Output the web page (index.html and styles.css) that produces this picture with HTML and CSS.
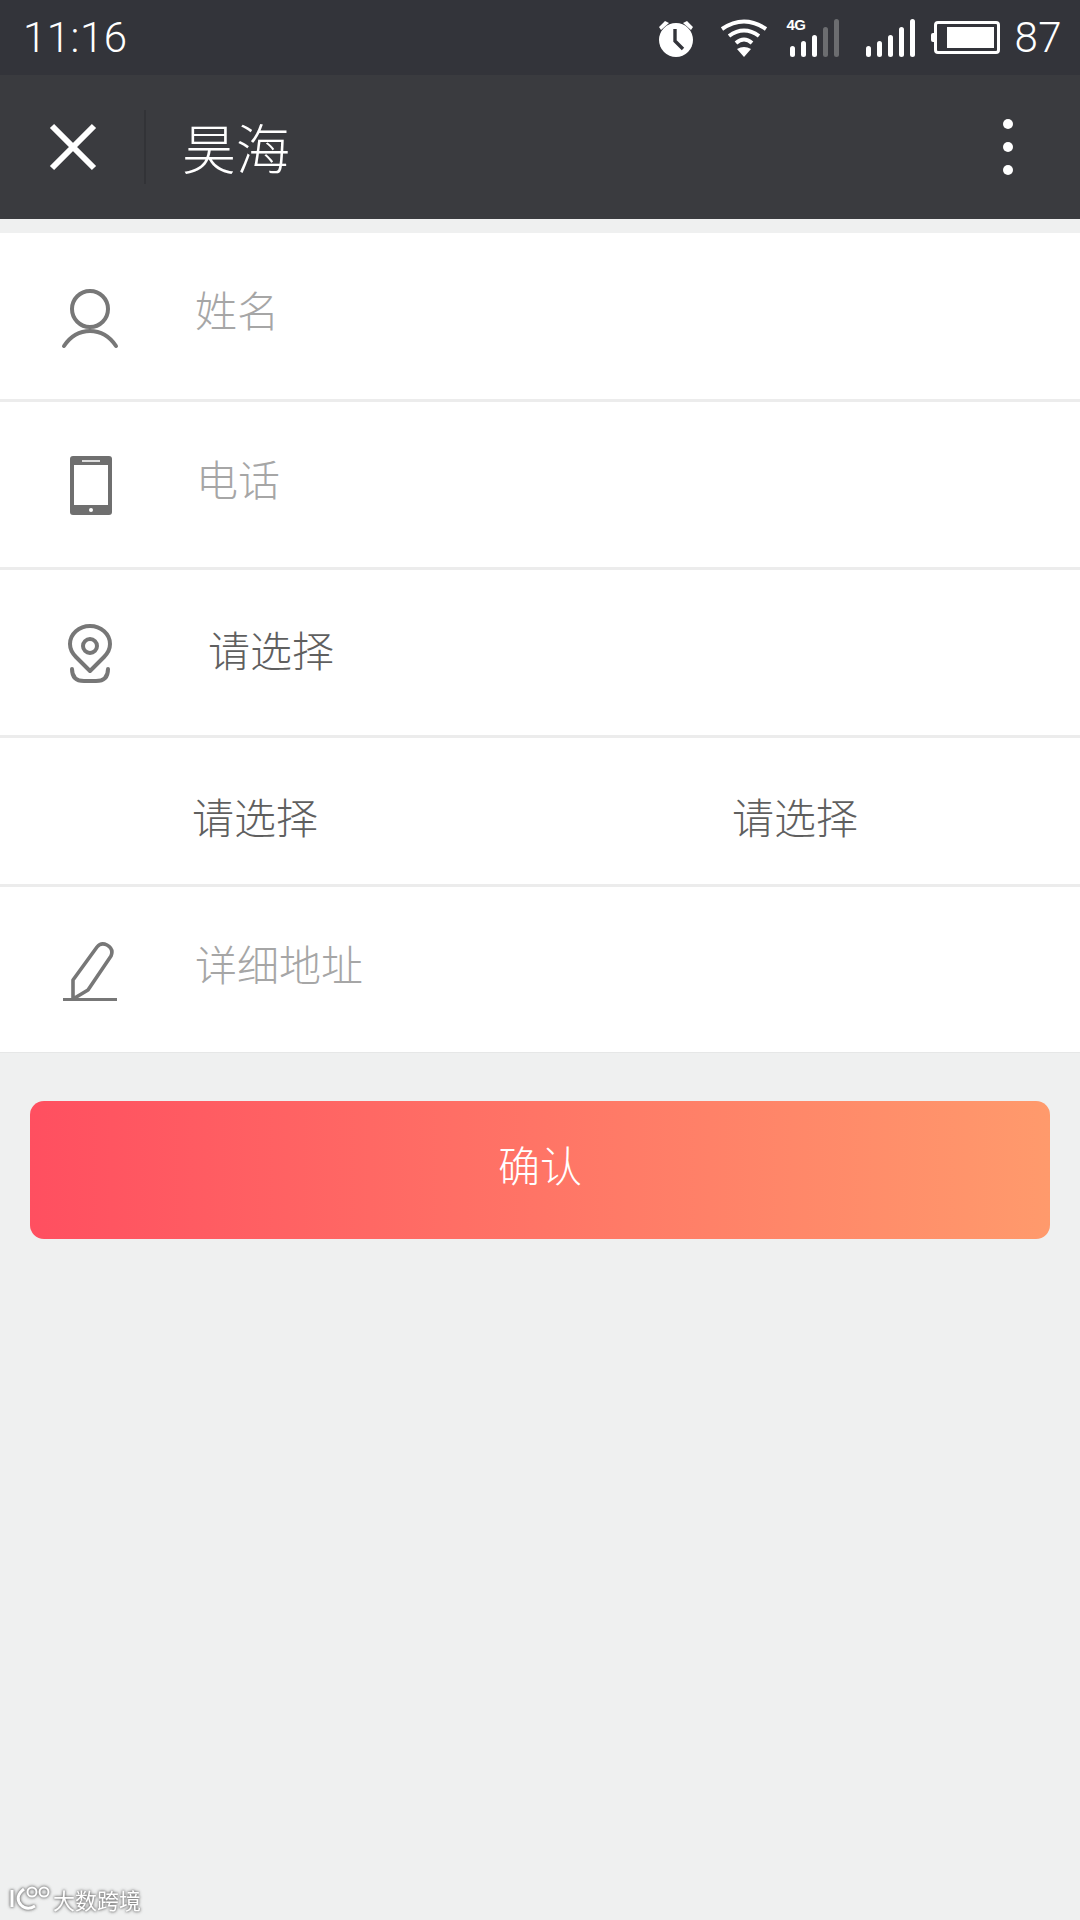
FILE: index.html
```html
<!DOCTYPE html>
<html lang="zh-CN">
<head>
    <meta charset="UTF-8">
    <meta name="viewport" content="width=device-width, initial-scale=1.0">
    <title>昊海</title>
    <link rel="stylesheet" href="styles.css">
</head>
<body>
    <div class="status-bar">
        <span class="time">11:16</span>
        <div class="status-icons">
            <svg class="ic-alarm" width="38" height="40" viewBox="0 0 38 40">
                <circle cx="19" cy="22" r="17" fill="#fff"/>
                <path d="M2 9 L8 3 L12 5 L4 12 Z M36 9 L30 3 L26 5 L34 12 Z" fill="#fff"/>
                <path d="M18 11 V23 L26 31" fill="none" stroke="#33343a" stroke-width="3.4"/>
            </svg>
            <svg class="ic-wifi" width="48" height="40" viewBox="0 0 48 40">
                <path d="M2 11 Q24 -4 46 11" fill="none" stroke="#fff" stroke-width="4"/>
                <path d="M9 18 Q24 7 39 18" fill="none" stroke="#fff" stroke-width="4"/>
                <path d="M16 25 Q24 18 32 25" fill="none" stroke="#fff" stroke-width="4"/>
                <path d="M17 31 Q24 27 31 31 L24 39 Z" fill="#fff"/>
            </svg>
            <div class="signal signal-4g">
                <span class="tag-4g">4G</span>
                <i class="b1"></i><i class="b2"></i><i class="b3"></i><i class="b4 off"></i><i class="b5 off"></i>
            </div>
            <div class="signal signal-main">
                <i class="b1"></i><i class="b2"></i><i class="b3"></i><i class="b4"></i><i class="b5"></i>
            </div>
            <div class="battery"><div class="battery-fill"></div></div>
            <span class="battery-num">87</span>
        </div>
    </div>

    <div class="nav-bar">
        <svg class="nav-close" width="48" height="48" viewBox="0 0 48 48">
            <path d="M3 3 L45 45 M45 3 L3 45" stroke="#fff" stroke-width="6" fill="none"/>
        </svg>
        <div class="nav-line"></div>
        <div class="nav-title">昊海</div>
        <div class="nav-more"><i></i><i></i><i></i></div>
    </div>

    <div class="form">
        <div class="row row-name">
            <svg class="row-icon" width="60" height="60" viewBox="0 0 60 60">
                <circle cx="30" cy="20" r="18" fill="none" stroke="#777" stroke-width="4"/>
                <path d="M4 57 Q14 42 30 42 Q46 42 56 57" fill="none" stroke="#777" stroke-width="4" stroke-linecap="round"/>
            </svg>
            <span class="placeholder">姓名</span>
        </div>
        <div class="row row-phone">
            <svg class="row-icon" width="60" height="60" viewBox="0 0 60 60">
                <rect x="10" y="0" width="42" height="59" rx="3" fill="#6f6f6f"/>
                <rect x="14" y="9" width="34" height="40" fill="#fff"/>
                <rect x="22" y="4" width="18" height="2" fill="#ddd"/>
                <circle cx="31" cy="54" r="2" fill="#fff"/>
            </svg>
            <span class="placeholder">电话</span>
        </div>
        <div class="row row-area">
            <svg class="row-icon" width="60" height="60" viewBox="0 0 60 60">
                <path d="M30 47 L16 33 Q10 27 10 20 A20 18 0 0 1 50 20 Q50 27 44 33 Z" fill="none" stroke="#777" stroke-width="4" stroke-linejoin="round"/>
                <circle cx="30" cy="22" r="7" fill="none" stroke="#777" stroke-width="4"/>
                <path d="M12 45 Q12 57 24 57 H36 Q48 57 48 45" fill="none" stroke="#777" stroke-width="4" stroke-linecap="round"/>
            </svg>
            <span class="choose">请选择</span>
        </div>
        <div class="row row-city">
            <span class="choose">请选择</span>
            <span class="choose">请选择</span>
        </div>
        <div class="row row-detail">
            <svg class="row-icon" width="60" height="60" viewBox="0 0 60 60">
                <path d="M13 58 L13 39 L37 6 Q41 1 47 4 Q54 8 51 15 L28 49 Z" fill="none" stroke="#777" stroke-width="3.6" stroke-linejoin="round"/>
                <path d="M3 59 H57" stroke="#777" stroke-width="4"/>
            </svg>
            <span class="placeholder">详细地址</span>
        </div>
    </div>

    <div class="confirm">确认</div>

    <div class="watermark">
        <svg width="44" height="28" viewBox="0 0 44 28">
            <path d="M3 5 V22 M15 4 Q5 12 12 20 Q18 26 26 21" fill="none" stroke="#fff" stroke-width="3"/>
            <circle cx="23" cy="7" r="4.5" fill="none" stroke="#fff" stroke-width="2"/>
            <circle cx="35" cy="7" r="4.5" fill="none" stroke="#fff" stroke-width="2"/>
        </svg>
        <span>大数跨境</span>
    </div>
</body>
</html>
```

FILE: styles.css
```css
* {
    box-sizing: border-box;
}

body {
    margin: 0;
    width: 1080px;
    height: 1920px;
    position: relative;
    overflow: hidden;
    background-color: #eff0f0;
    font-family: "Noto Sans CJK SC", sans-serif;
    font-weight: 300;
}

/* status bar */
.status-bar {
    height: 75px;
    background-color: #33343a;
    display: flex;
    align-items: center;
    justify-content: space-between;
    padding: 0 18px 0 23px;
    color: #fff;
}

.time,
.battery-num {
    font-family: Roboto, sans-serif;
    font-weight: 300;
    font-size: 42px;
    letter-spacing: 0.5px;
    line-height: 75px;
}

.status-icons {
    display: flex;
    align-items: center;
}

.ic-alarm {
    margin-right: 25px;
}

.ic-wifi {
    margin-right: 22px;
}

.signal {
    position: relative;
    display: flex;
    align-items: flex-end;
    gap: 6px;
    height: 38px;
    margin-top: 1px;
}

.signal i {
    display: block;
    width: 5px;
    border-radius: 3px;
    background-color: #fff;
}

.signal i.off {
    background-color: #6c6d70;
}

.signal .b1 { height: 11px; }
.signal .b2 { height: 16px; }
.signal .b3 { height: 22px; }
.signal .b4 { height: 30px; }
.signal .b5 { height: 38px; }

.signal-main {
    margin-left: 27px;
    margin-right: 19px;
}

.tag-4g {
    position: absolute;
    left: -4px;
    top: -2px;
    font-family: "Liberation Sans", sans-serif;
    font-weight: bold;
    font-size: 15px;
    line-height: 15px;
    letter-spacing: -0.5px;
}

.battery {
    width: 66px;
    height: 33px;
    border: 3px solid #fff;
    border-radius: 4px;
    display: flex;
    justify-content: flex-end;
    padding: 3px;
    position: relative;
}

.battery::before {
    content: "";
    position: absolute;
    left: -6px;
    top: 9px;
    width: 3px;
    height: 9px;
    background-color: #fff;
    border-radius: 2px 0 0 2px;
}

.battery-fill {
    width: 47px;
    background-color: #fff;
}

.battery-num {
    margin-left: 14px;
}

/* nav bar */
.nav-bar {
    height: 144px;
    background-color: #3a3b3f;
    display: flex;
    align-items: center;
    color: #fff;
    position: relative;
}

.nav-close {
    margin-left: 49px;
}

.nav-line {
    width: 2px;
    height: 74px;
    margin-left: 47px;
    background-color: #323337;
}

.nav-title {
    margin-left: 36px;
    font-size: 54px;
    line-height: 60px;
}

.nav-more {
    margin-left: auto;
    margin-right: 67px;
    display: flex;
    flex-direction: column;
    gap: 13px;
}

.nav-more i {
    display: block;
    width: 10px;
    height: 10px;
    border-radius: 50%;
    background-color: #fff;
}

/* form */
.form {
    margin-top: 14px;
    background-color: #fff;
}

.row {
    display: flex;
    align-items: center;
    border-bottom: 3px solid #ececec;
    font-size: 42px;
}

.row-name { height: 169px; }
.row-phone { height: 168px; }
.row-area { height: 168px; }
.row-city { height: 149px; }
.row-detail { height: 166px; border-bottom: 1px solid #e6e7e7; }

.row-icon {
    flex: none;
    margin-left: 60px;
}

.row-name .row-icon { margin-top: 6px; }
.row-phone .row-icon { margin-top: 2px; }
.row-area .row-icon { margin-top: 2px; }
.row-detail .row-icon { margin-top: 2px; }

.placeholder {
    color: #a6a6a6;
}

.choose {
    color: #5f5f5f;
}

.row-name .placeholder { margin-left: 75px; margin-top: -16px; }
.row-phone .placeholder { margin-left: 76px; margin-top: -14px; }
.row-area .choose { margin-left: 88px; margin-top: -8px; }
.row-city .choose { margin-left: 192px; margin-top: 8px; }
.row-city .choose + .choose { margin-left: 414px; }
.row-detail .placeholder { margin-left: 75px; margin-top: -14px; }

/* button */
.confirm {
    margin: 48px 30px 0;
    height: 138px;
    padding-bottom: 14px;
    border-radius: 14px;
    background: linear-gradient(to right, #ff4f60, #ff9a6c);
    color: #fff;
    font-size: 42px;
    display: flex;
    align-items: center;
    justify-content: center;
}

/* watermark */
.watermark {
    position: absolute;
    left: 9px;
    bottom: 5px;
    display: flex;
    align-items: center;
    gap: 0;
    color: #fff;
    font-size: 22px;
    font-weight: 400;
    filter: drop-shadow(0 0 1.5px #777) drop-shadow(0 0 1px #999);
}
```
